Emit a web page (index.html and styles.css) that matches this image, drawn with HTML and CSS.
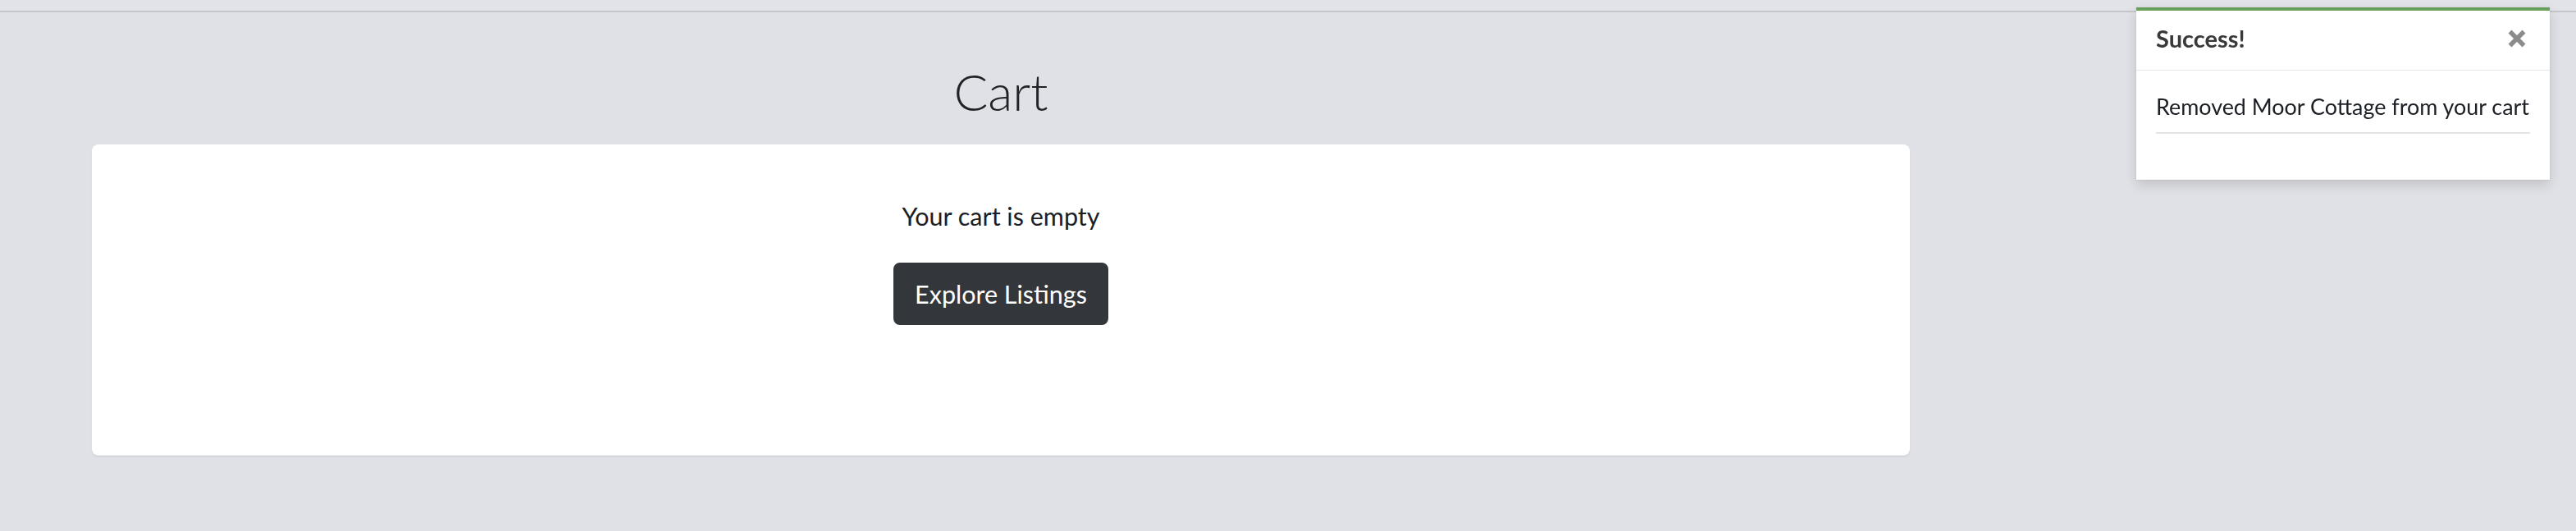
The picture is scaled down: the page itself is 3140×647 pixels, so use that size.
FILE: index.html
```html
<!DOCTYPE html>
<html lang="en">
<head>
<meta charset="utf-8">
<title>Cart</title>
<link rel="stylesheet" href="styles.css">
</head>
<body>
<header class="topbar"></header>
<main class="main">
  <h1 class="title">Cart</h1>
  <section class="card">
    <p class="empty">Your cart is empty</p>
    <a class="btn" href="#">Explore Listings</a>
  </section>
</main>
<div class="toast">
  <div class="toast-header">
    <strong class="toast-title">Success!</strong>
    <button class="toast-close" aria-label="Close">
      <svg width="24" height="24" viewBox="0 0 24 24"><path d="M3.5 3.5L20.5 20.5M20.5 3.5L3.5 20.5" stroke="#8c8c8c" stroke-width="5.5" stroke-linecap="butt"/></svg>
    </button>
  </div>
  <div class="toast-body">
    <p class="toast-text">Removed Moor Cottage from your cart</p>
    <hr class="toast-rule">
  </div>
</div>
</body>
</html>
```
FILE: styles.css
```css
* { box-sizing: border-box; }
html, body { margin: 0; padding: 0; }
body {
  background: #e0e1e6;
  font-family: "Lato", "Liberation Sans", sans-serif;
  color: #212529;
  width: 3140px;
  height: 647px;
  overflow: hidden;
}
.topbar {
  height: 15px;
  border-bottom: 2px solid #c5c6cb;
  background: #e2e3e8;
}
.main {
  padding-left: 112px;
  width: 2328px;
}
.title {
  margin: 59px 0 28px 0;
  text-align: center;
  font-family: "Lato", sans-serif;
  font-weight: 300;
  font-size: 62px;
  line-height: 74px;
  color: #1f2326;
}
.card {
  background: #fff;
  border-radius: 8px;
  height: 379px;
  padding-top: 63px;
  box-shadow: 0 2px 2px rgba(0,0,0,0.06);
  display: flex;
  flex-direction: column;
  align-items: center;
}
.empty {
  margin: 0 0 33px 0;
  font-size: 30.5px;
  line-height: 48px;
  color: #1c2024;
}
.btn {
  display: inline-block;
  background: #33363b;
  color: #fff;
  text-decoration: none;
  font-size: 30.5px;
  line-height: 48px;
  padding: 12px 24px;
  border: 2px solid #33363b;
  border-radius: 8px;
}
.toast {
  position: fixed;
  top: 9px;
  right: 32px;
  width: 504px;
  height: 210px;
  background: #fff;
  border-top: 4px solid #66a05a;
  box-shadow: 0 6px 14px rgba(0,0,0,0.14), 0 0 1px rgba(0,0,0,0.2);
}
.toast-header {
  display: flex;
  align-items: center;
  justify-content: space-between;
  padding: 13px 28px 17px 24px;
  border-bottom: 1px solid #e8e8ea;
}
.toast-title {
  font-family: "Lato", sans-serif;
  font-weight: 700;
  font-size: 29px;
  line-height: 42px;
  color: #38393b;
}
.toast-close {
  border: 0;
  background: none;
  padding: 0;
  width: 24px;
  height: 24px;
  display: flex;
}
.toast-body {
  padding: 23px 24px 0 24px;
}
.toast-text {
  margin: 0 0 10px 0;
  font-size: 26.9px;
  line-height: 42px;
  color: #1c2024;
  white-space: nowrap;
}
.toast-rule {
  margin: 0;
  border: 0;
  border-top: 2px solid #e3e3e6;
}
```
